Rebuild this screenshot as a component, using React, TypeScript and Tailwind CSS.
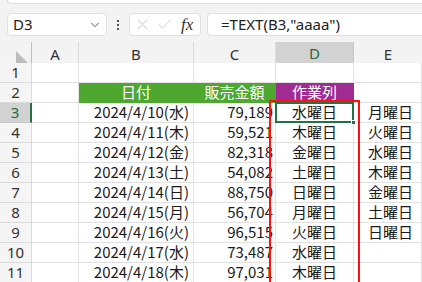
import { Check, ChevronDown, X } from "lucide-react";

const dates = ["10(水)", "11(木)", "12(金)", "13(土)", "14(日)", "15(月)", "16(火)", "17(水)", "18(木)"];
const sales = ["79,189", "59,521", "82,318", "54,082", "88,750", "56,704", "96,515", "73,487", "97,031"];
const weekdays = ["水曜日", "木曜日", "金曜日", "土曜日", "日曜日", "月曜日", "火曜日", "水曜日", "木曜日"];
const listE = ["月曜日", "火曜日", "水曜日", "木曜日", "金曜日", "土曜日", "日曜日"];

const font = "font-['Noto_Sans_CJK_JP','Noto_Sans',sans-serif]";
const grid = "grid grid-cols-[32px_47px_115px_82px_78px_1fr]";

function RowHead({ n, active }: { n: number; active?: boolean }) {
  return (
    <div
      className={
        active
          ? "flex h-[20px] items-center justify-center border-r-2 border-b border-r-[#217346] border-b-[#c8c8c8] bg-[#d2d2d2] font-['Noto_Sans',sans-serif] text-[#1e6b3c]"
          : "flex h-[20px] items-center justify-center border-r border-b border-[#dadada] bg-[#f5f5f5] font-['Noto_Sans',sans-serif] text-[#333]"
      }
    >
      {n}
    </div>
  );
}

function Cell({ children, className = "", fill = "bg-white border-[#e1e1e1]" }: { children?: React.ReactNode; className?: string; fill?: string }) {
  return <div className={`flex h-[20px] items-center border-r border-b ${fill} ${className}`}>{children}</div>;
}

export default function App() {
  return (
    <div className={`relative h-[282px] w-[422px] overflow-hidden bg-[#f3f3f3] text-[15px] text-[#1a1a1a] ${font}`}>
      <div className="h-[13px]">
        <div className="ml-[7px] h-[4px] rounded-bl-[4px] border-b border-l border-[#dcdcdc] bg-white" />
      </div>

      <div className="flex h-[23px] items-center">
        <div className="ml-[7px] flex h-[23px] w-[100px] items-center justify-between rounded-[4px] border border-[#e0e0e0] bg-white pr-[4px] pl-[5px]">
          <span className="font-['Noto_Sans',sans-serif] text-[15px] text-[#222]">D3</span>
          <ChevronDown className="h-[14px] w-[14px] text-[#444]" strokeWidth={1.5} />
        </div>
        <div className="flex w-[22px] flex-col items-center gap-[2px]">
          <span className="h-[2px] w-[2px] bg-[#555]" />
          <span className="h-[2px] w-[2px] bg-[#555]" />
          <span className="h-[2px] w-[2px] bg-[#555]" />
        </div>
        <div className="flex h-[23px] w-[72px] items-center gap-[5px] rounded-[4px] border border-[#e0e0e0] bg-white pl-[4px]">
          <X className="h-[17px] w-[17px] text-[#c4c4c4]" strokeWidth={1.2} />
          <Check className="h-[17px] w-[17px] text-[#c4c4c4]" strokeWidth={1.2} />
          <span className="ml-[3px] font-['Liberation_Serif',serif] text-[17px] italic text-[#333]">fx</span>
        </div>
        <div className="ml-[6px] flex h-[23px] flex-1 items-center rounded-l-[4px] border border-r-0 border-[#e0e0e0] bg-white pl-[13px]">
          <span className="font-['Noto_Sans',sans-serif] text-[15px] text-[#222]">=TEXT(B3,"aaaa")</span>
        </div>
      </div>

      <div className={`${grid} mt-[6px] h-[21px] font-['Noto_Sans',sans-serif] text-[15px] text-[#333]`}>
        <div className="flex items-end justify-end border-r border-b border-[#bdbdbd] pr-[2px] pb-[2px]">
          <div className="h-0 w-0 border-t-[13px] border-l-[13px] border-t-transparent border-l-[#bdbdbd]" />
        </div>
        <div className="flex items-center justify-center border-r border-b border-[#dadada]">A</div>
        <div className="flex items-center justify-center border-r border-b border-[#dadada]">B</div>
        <div className="flex items-center justify-center border-r border-b border-[#dadada]">C</div>
        <div className="flex items-center justify-center border-r border-b-2 border-r-[#c8c8c8] border-b-[#217346] bg-[#d2d2d2] text-[#1e6b3c]">D</div>
        <div className="flex items-center justify-center border-b border-[#dadada]">E</div>
      </div>

      <div className={grid}>
        <RowHead n={1} />
        <Cell />
        <Cell />
        <Cell />
        <Cell />
        <Cell />

        <RowHead n={2} />
        <Cell />
        <Cell fill="bg-[#4ea72e] border-[#4ea72e]" className="justify-center text-white">日付</Cell>
        <Cell fill="bg-[#4ea72e] border-[#4ea72e]" className="justify-center text-white">販売金額</Cell>
        <Cell fill="bg-[#a02b93] border-[#a02b93]" className="justify-center text-white">作業列</Cell>
        <Cell />

        {dates.map((d, i) => (
          <div key={d} className="contents">
            <RowHead n={i + 3} active={i === 0} />
            <Cell />
            <Cell className="justify-end pr-[4px]">2024/4/{d}</Cell>
            <Cell className="justify-end pr-[2px]">{sales[i]}</Cell>
            <Cell className="justify-center">{weekdays[i]}</Cell>
            <Cell className="justify-start pl-[14px]">{listE[i]}</Cell>
          </div>
        ))}
      </div>

      <div className="absolute top-[102px] left-[275px] h-[21px] w-[79px] border-2 border-[#217346]">
        <div className="absolute -right-[4px] -bottom-[4px] h-[5px] w-[5px] border border-white bg-[#217346]" />
      </div>
      <div className="absolute top-[100px] left-[269px] h-[200px] w-[91px] border-2 border-[#ff1010]" />
    </div>
  );
}
